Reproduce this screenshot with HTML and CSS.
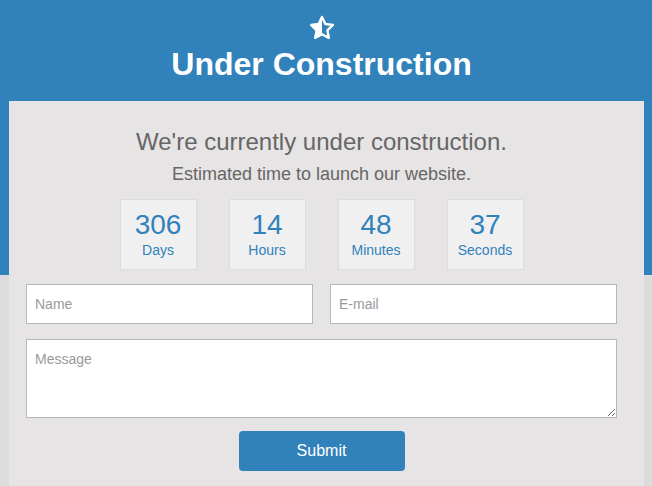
FILE: index.html
```html
<!DOCTYPE html>
<html lang="en">
  <head>
    <meta charset="UTF-8" />
    <meta name="viewport" content="width=device-width, initial-scale=1.0" />
    <title>Under Construction</title>
    <link rel="stylesheet" href="styles.css">
  </head>
  <body>
    <header class="top">
      <svg class="star" width="26" height="26" viewBox="0 0 24 24" aria-hidden="true">
        <path d="M12 1.8l3.1 6.5 7 .9-5.1 4.9 1.3 7-6.3-3.4-6.3 3.4 1.3-7-5.1-4.9 7-.9z" fill="none" stroke="#fff" stroke-width="2.2" stroke-linejoin="round"/>
        <path d="M12 1.8v15.9l-6.3 3.4 1.3-7-5.1-4.9 7-.9z" fill="#fff"/>
      </svg>
      <h1>Under Construction</h1>
    </header>

    <main class="panel">
      <h2>We're currently under construction.</h2>
      <p class="lead">Estimated time to launch our website.</p>

      <div class="countdown">
        <div class="unit"><span class="num">306</span><span class="label">Days</span></div>
        <div class="unit"><span class="num">14</span><span class="label">Hours</span></div>
        <div class="unit"><span class="num">48</span><span class="label">Minutes</span></div>
        <div class="unit"><span class="num">37</span><span class="label">Seconds</span></div>
      </div>

      <form class="contact" onsubmit="return false;">
        <div class="row">
          <input type="text" placeholder="Name" />
          <input type="email" placeholder="E-mail" />
        </div>
        <textarea placeholder="Message"></textarea>
        <button type="submit">Submit</button>
      </form>
    </main>
  </body>
</html>
```

FILE: styles.css
```css
* {
  margin: 0;
  padding: 0;
  box-sizing: border-box;
  font-family: 'Liberation Sans', Arial, sans-serif;
}

body {
  background: linear-gradient(#3182bb 0, #3182bb 275px, #dcdcdc 275px);
  min-height: 100vh;
}

.top {
  height: 101px;
  padding: 15px 9px 0 0;
  text-align: center;
  color: #fff;
}

.star {
  display: block;
  margin: 0 auto;
}

.top h1 {
  font-size: 32px;
  font-weight: bold;
  margin-top: 5px;
}

/* Main panel */
.panel {
  margin: 0 8px 0 9px;
  min-height: calc(100vh - 101px);
  background: #e6e4e4;
  padding: 27px 27px 20px 17px;
  text-align: center;
  color: #666;
}

.panel h2 {
  font-size: 24px;
  font-weight: normal;
}

.lead {
  font-size: 18px;
  margin-top: 8px;
}

.countdown {
  display: flex;
  justify-content: center;
  gap: 32px;
  margin-top: 14px;
}

.unit {
  width: 77px;
  height: 71px;
  background: #f0f0f0;
  border: 1px solid #dddcdc;
  color: #3182bb;
  display: flex;
  flex-direction: column;
  align-items: center;
  padding-top: 9px;
}

.num {
  font-size: 28px;
  line-height: 32px;
}

.label {
  font-size: 14px;
  margin-top: 1px;
}

/* Contact form */
.contact {
  margin-top: 14px;
  display: flex;
  flex-direction: column;
  align-items: center;
}

.row {
  display: flex;
  gap: 17px;
  width: 100%;
}

.contact input,
.contact textarea {
  height: 40px;
  border: 1px solid #b8b6b6;
  background: #fff;
  font-size: 14px;
  padding: 0 8px;
  color: #333;
}

.contact input {
  flex: 1;
  min-width: 0;
}

.contact textarea {
  width: 100%;
  height: 79px;
  margin-top: 15px;
  padding: 11px 8px;
  resize: vertical;
}

.contact ::placeholder {
  color: #9d989d;
}

.contact button {
  margin-top: 13px;
  width: 166px;
  height: 40px;
  border: none;
  border-radius: 4px;
  background: #3182bb;
  color: #fff;
  font-size: 16px;
  cursor: pointer;
}
```
